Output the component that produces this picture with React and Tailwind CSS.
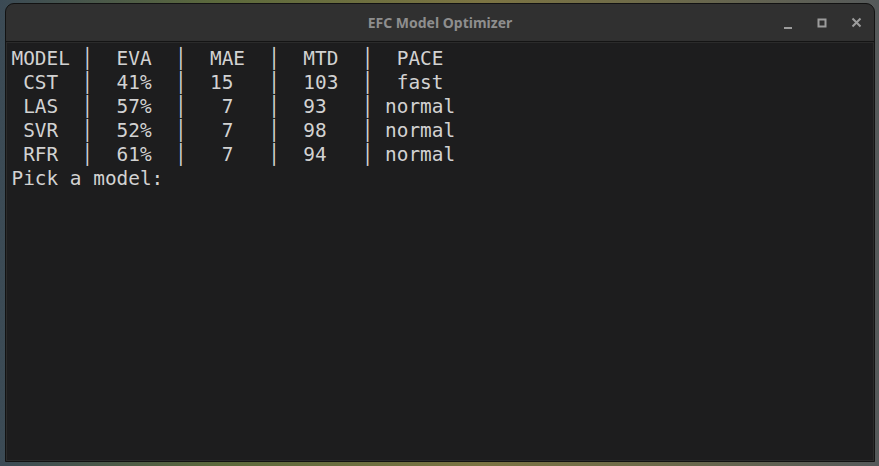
import React from 'react';

const rows = [
  'MODEL │  EVA  │  MAE  │  MTD  │  PACE',
  ' CST  │  41%  │  15   │  103  │  fast',
  ' LAS  │  57%  │   7   │  93   │ normal',
  ' SVR  │  52%  │   7   │  98   │ normal',
  ' RFR  │  61%  │   7   │  94   │ normal',
  'Pick a model:',
];

const TitleBar = () => (
  <div className="relative flex h-[37px] items-center justify-center rounded-t-[8px] bg-[#303030]">
    <span className="font-['Noto_Sans',sans-serif] text-[14px] font-bold text-[#8e8e8e]">
      EFC Model Optimizer
    </span>
    <div className="absolute right-[12px] top-0 flex h-full items-center gap-[24px] text-[#9c9c9c]">
      <svg width="10" height="10" viewBox="0 0 10 10" className="mt-[4px]">
        <rect x="1" y="7" width="8" height="2" fill="currentColor" />
      </svg>
      <svg width="10" height="10" viewBox="0 0 10 10">
        <rect x="1.5" y="1.5" width="7" height="7" fill="none" stroke="currentColor" strokeWidth="2" />
      </svg>
      <svg width="11" height="11" viewBox="0 0 11 11">
        <path d="M1.5 1.5 L9.5 9.5 M9.5 1.5 L1.5 9.5" stroke="currentColor" strokeWidth="2" />
      </svg>
    </div>
  </div>
);

export default function App() {
  return (
    <div className="h-[466px] w-[879px] overflow-hidden bg-[linear-gradient(90deg,#3b4a55,#5d6a3c_25%,#7c7443_55%,#6d6a4a_75%,#55595a)] pb-[4px] pl-[5px] pr-[4px] pt-[3px]">
      <div className="flex h-full flex-col rounded-t-[9px] border border-[#121212] bg-[#161616]">
        <TitleBar />
        <div className="h-[1px] bg-[#141414]" />
        <div className="flex-1 border border-[#2b2b2b] bg-[#1d1d1e] pl-[4.5px] pt-[4px]">
          <div className="whitespace-pre font-['DejaVu_Sans_Mono',monospace] text-[19.4px] leading-[24px] text-[#d2d2d2]">
            {rows.map((r, i) => (
              <div key={i}>{r}</div>
            ))}
          </div>
        </div>
      </div>
    </div>
  );
}
